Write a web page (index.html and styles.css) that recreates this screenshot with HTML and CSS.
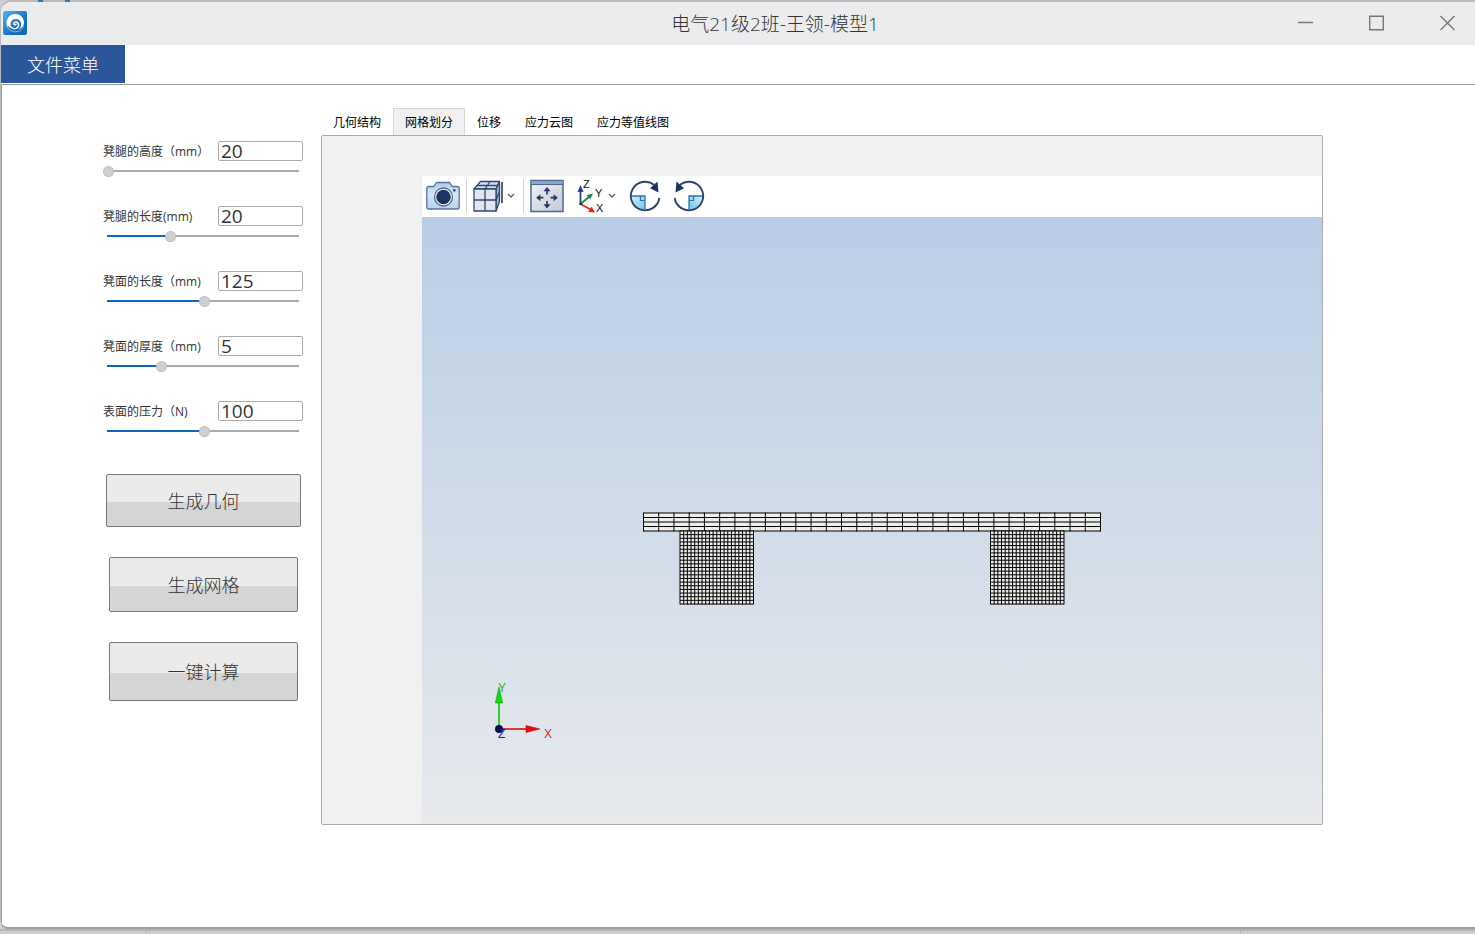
FILE: index.html
```html
<!DOCTYPE html>
<html lang="zh-CN">
<head>
<meta charset="utf-8">
<title>电气21级2班-王领-模型1</title>
<link rel="stylesheet" href="styles.css">
</head>
<body>
<div class="window">
  <header class="titlebar">
    <svg class="logo" viewBox="0 0 24 24" aria-hidden="true">
      <defs><linearGradient id="logo-bg" x1="0" y1="0" x2="1" y2="1"><stop offset="0" stop-color="#4cb4f3"/><stop offset=".7" stop-color="#1468b8"/></linearGradient></defs>
      <rect width="24" height="24" rx="2" fill="url(#logo-bg)"/>
      <path d="M4.500 17C1.500 10 5.500 3 12 3c5 0 9 3.300 9 8.300 0 4-2.800 6.400-6.200 6.900 2-.9 3.400-2.600 3.400-5 0-3-2.300-5.100-5.300-5.100-3.200 0-5.400 2.100-5.400 4.900 0 1.700.7 3 2 4C6.800 16.800 5.200 15.500 4.500 14z" fill="#fff"/>
      <path d="M8.500 16.500c1.500 1.300 3.700 1.600 5.300.5 2-1.300 2.400-4 .8-5.400-1.400-1.200-3.700-.5-3.700 1.100 0 1 1.300 1.500 2 .7" fill="none" stroke="#fff" stroke-width="1.500" stroke-linecap="round"/>
      <path d="M4 15c1.200 3.700 4.500 5.900 8.300 5.900 4.400 0 7.900-3 8.500-7.400" fill="none" stroke="#8ec4ee" stroke-width=".9"/>
    </svg>
    <h1 class="title">电气21级2班-王领-模型1</h1>
    <div class="controls">
      <button type="button" aria-label="最小化"><svg viewBox="0 0 15 16"><path d="M0 7.500h15"/></svg></button>
      <button type="button" aria-label="最大化"><svg viewBox="0 0 15 16"><path d="M.7 1.200h13.600v13.600H.7z"/></svg></button>
      <button type="button" aria-label="关闭"><svg viewBox="0 0 15 16"><path d="M.5 1l14 14M14.500 1l-14 14"/></svg></button>
    </div>
  </header>
  <nav class="menubar"><button type="button" class="menu-item">文件菜单</button></nav>
  <main class="content">
    <aside class="sidebar">
      <form class="fields">
        <div class="field">
          <div class="field-head"><label for="leg-height">凳腿的高度（mm）</label><input class="value" id="leg-height" type="text" value="20"></div>
          <input class="slider" type="range" min="0" max="1000" value="0" aria-label="凳腿的高度" style="--fill:0%">
        </div>
        <div class="field">
          <div class="field-head"><label for="leg-length">凳腿的长度(mm)</label><input class="value" id="leg-length" type="text" value="20"></div>
          <input class="slider" type="range" min="0" max="1000" value="328" aria-label="凳腿的长度" style="--fill:33%">
        </div>
        <div class="field">
          <div class="field-head"><label for="seat-length">凳面的长度（mm)</label><input class="value" id="seat-length" type="text" value="125"></div>
          <input class="slider" type="range" min="0" max="1000" value="508" aria-label="凳面的长度" style="--fill:50%">
        </div>
        <div class="field">
          <div class="field-head"><label for="seat-thickness">凳面的厚度（mm)</label><input class="value" id="seat-thickness" type="text" value="5"></div>
          <input class="slider" type="range" min="0" max="1000" value="280" aria-label="凳面的厚度" style="--fill:28%">
        </div>
        <div class="field">
          <div class="field-head"><label for="pressure">表面的压力（N)</label><input class="value" id="pressure" type="text" value="100"></div>
          <input class="slider" type="range" min="0" max="1000" value="508" aria-label="表面的压力" style="--fill:50%">
        </div>
      </form>
      <div class="actions">
        <button type="button" class="action geometry">生成几何</button>
        <button type="button" class="action mesh-button">生成网格</button>
        <button type="button" class="action compute">一键计算</button>
      </div>
    </aside>
    <section class="workspace">
      <div class="tabs" role="tablist">
        <button type="button" role="tab" class="tab">几何结构</button>
        <button type="button" role="tab" class="tab selected" aria-selected="true">网格划分</button>
        <button type="button" role="tab" class="tab">位移</button>
        <button type="button" role="tab" class="tab">应力云图</button>
        <button type="button" role="tab" class="tab">应力等值线图</button>
      </div>
      <div class="viewer">
        <div class="toolbar" role="toolbar">
          <button type="button" class="tool" aria-label="截图">
            <svg width="34" height="32" viewBox="0 0 34 32">
              <defs><linearGradient id="cam" x1="0" y1="0" x2="0" y2="1"><stop offset="0" stop-color="#a9cbea"/><stop offset=".45" stop-color="#d7e7f6"/><stop offset="1" stop-color="#b4d2ee"/></linearGradient></defs>
              <path d="M2.500 6.500h5.200l2.800-4h13l2.800 4h5.200q1.700 0 1.700 1.700V27q0 2-2 2H2.800q-2 0-2-2V8.200q0-1.700 1.700-1.700z" fill="url(#cam)" stroke="#5c7395" stroke-width="1.300"/>
              <circle cx="17.500" cy="17" r="9" fill="#eef3f8" stroke="#52698d" stroke-width="1.300"/>
              <circle cx="17.500" cy="17" r="6.700" fill="#1c3564" stroke="#102750"/>
              <circle cx="28.300" cy="10.300" r="1.200" fill="#1f3c70"/>
            </svg>
          </button>
          <span class="divider"></span>
          <button type="button" class="tool with-menu" aria-label="视图">
            <svg width="30" height="32" viewBox="0 0 30 32">
              <g stroke="#34466e" stroke-width="1.300" stroke-linejoin="round">
                <path d="M1 9L7.500 1.500h19L23 9z" fill="#c7e3f7"/>
                <path d="M23 9l3.500-7.500v20L23 31z" fill="#9db1c9"/>
                <path d="M1 9h22v22H1z" fill="#e1e5ed"/>
                <path d="M12 31V9l5-7.500M1 20h22l3.500-8M4 5.500h20.700" fill="none"/>
                <path d="M29 2v21" fill="none" stroke-width="1.700"/>
              </g>
            </svg>
            <svg class="chevron" width="8" height="6" viewBox="0 0 8 6"><path d="M1 1l3 3 3-3"/></svg>
          </button>
          <span class="divider"></span>
          <button type="button" class="tool" aria-label="适应窗口">
            <svg width="34" height="34" viewBox="0 0 34 34">
              <defs><linearGradient id="fit" x1="0" y1="0" x2="1" y2="1"><stop offset="0" stop-color="#f0f1f5"/><stop offset="1" stop-color="#c4cad6"/></linearGradient></defs>
              <path d="M1 1.500h32v31H1z" fill="url(#fit)" stroke="#52658b" stroke-width="1.500"/>
              <path d="M1.500 2h31v3h-31z" fill="#84a8d4"/><path d="M1 5.500h32" stroke="#52658b"/>
              <g fill="none" stroke="#213a68" stroke-width="1.700"><path d="M17 9.500v6M17 22v6M7.500 18.700h6M20.500 18.700h6"/></g>
              <path d="M17 8l3.500 4.200h-7zM17 29.500l3.500-4.200h-7zM6.200 18.700l4.200-3.500v7zM27.800 18.700l-4.200-3.500v7z" fill="#213a68"/>
            </svg>
          </button>
          <button type="button" class="tool with-menu axes-tool spaced" aria-label="坐标轴">
            <svg width="28" height="36" viewBox="0 0 28 36">
              <path d="M3.500 26V12" stroke="#25409a" stroke-width="1.800"/><path d="M3.500 7L.5 14h6z" fill="#25409a"/>
              <path d="M3.500 26L13 18" stroke="#168b42" stroke-width="1.800"/><path d="M16 15.500l-6.500 1.800 3.700 4z" fill="#168b42"/>
              <path d="M3.500 26l11 6" stroke="#e52720" stroke-width="1.800"/><path d="M18 34.500l-3.500-6-3.300 5.500z" fill="#e52720"/>
              <circle cx="3.500" cy="26" r="1.200" fill="#222"/>
              <g class="axis-label"><text x="6" y="10">Z</text><text x="18" y="19">Y</text><text x="19" y="34">X</text></g>
            </svg>
            <svg class="chevron" width="8" height="6" viewBox="0 0 8 6"><path d="M1 1l3 3 3-3"/></svg>
          </button>
          <button type="button" class="tool spaced" aria-label="顺时针旋转">
            <svg width="32" height="34" viewBox="0 0 32 34">
              <defs><linearGradient id="turn" x1="0" y1="0" x2="1" y2="1"><stop offset="0" stop-color="#d5effb"/><stop offset="1" stop-color="#72c1e8"/></linearGradient></defs>
              <g id="turn-icon">
                <path d="M2 17h14v14.500C8 31.500 2 25.500 2 17z" fill="url(#turn)"/>
                <path d="M1.500 17H16v15" fill="none" stroke="#2b73ae" stroke-width="1.300"/><path d="M11.500 17v4.500H16" fill="none" stroke="#2b73ae" stroke-width="1.200"/>
                <path d="M30.300 19A14.300 14.300 0 1 1 25 5.800" fill="none" stroke="#2d446f" stroke-width="1.900"/>
                <path d="M28.500 2.500l1 11-8.500-4.300z" fill="#1b3261"/>
              </g>
            </svg>
          </button>
          <button type="button" class="tool spaced" aria-label="逆时针旋转">
            <svg width="32" height="34" viewBox="0 0 32 34"><use href="#turn-icon" transform="translate(32 0) scale(-1 1)"/></svg>
          </button>
        </div>
        <svg class="scene" viewBox="0 0 900 607" role="img" aria-label="网格模型">
          <g id="mesh" class="mesh"></g>
          <g class="triad">
            <path d="M77 512V484" stroke="#19c819" stroke-width="1.700"/><path d="M77 470l3.700 16h-7.400z" fill="#0ddc0d" stroke="#129c12" stroke-width=".6"/>
            <path d="M77 512h28" stroke="#d01c1c" stroke-width="1.700"/><path d="M118 512l-14-3.500v7z" fill="#f00808" stroke="#b01010" stroke-width=".6"/>
            <circle cx="77" cy="512" r="4" fill="#050a55"/>
            <text x="76" y="475" fill="#29b329">Y</text><text x="76" y="521" fill="#1414dd">Z</text><text x="122" y="521" fill="#c52b2b">X</text>
          </g>
        </svg>
      </div>
    </section>
  </main>
</div>
<footer class="desktop-strip"></footer>
<script src="mesh.js"></script>
</body>
</html>
```
FILE: styles.css
```css
* { box-sizing: border-box; }

body {
  margin: 0;
  min-height: 100vh;
  display: flex;
  flex-direction: column;
  background: #d0d0d0;
  color: #333;
  font-family: "Open Sans", "Noto Sans CJK SC", sans-serif;
  font-size: 12px;
}

/* Desktop marks showing along the top edge of the window */
body::before {
  content: "";
  position: absolute;
  top: 0;
  left: 38px;
  width: 32px;
  height: 2px;
  background: linear-gradient(90deg, #3a75a3 5px, transparent 5px, transparent 27px, #3a75a3 27px);
}

button, input { font: inherit; color: inherit; }
button { margin: 0; padding: 0; border: 0; background: none; }
svg { display: block; }

.window {
  flex: 1;
  display: flex;
  flex-direction: column;
  overflow: hidden;
  border: solid #bbb;
  border-width: 2px 0 2px 1px;
  border-bottom-color: #9b9e9d;
  border-radius: 12px 0 0 8px;
  background: #fff;
}

.titlebar {
  display: flex;
  align-items: center;
  height: 43px;
  padding: 0 20px 2px 2px;
  background: #ebecee;
}
.logo { width: 24px; height: 24px; }
.title {
  flex: 1;
  margin: 0 0 0 225px;
  padding-top: 2px;
  text-align: center;
  font-size: 19px;
  font-weight: 300;
  line-height: 24px;
}
.controls { display: flex; gap: 56px; }
.controls svg { width: 15px; height: 16px; fill: none; stroke: #777; stroke-width: 1.4; }

.menubar {
  display: flex;
  height: 40px;
  border-bottom: 1px solid #999;
  padding-bottom: 1px;
}
.menu-item {
  padding: 0 26px;
  background: #2b579a;
  color: #fff;
  font-size: 18px;
  font-weight: 300;
}

.content {
  flex: 1;
  display: flex;
  gap: 18px;
  padding: 23px 152px 102px 101px;
  border-left: 1px solid #999;
}

.sidebar { width: 200px; padding-top: 33px; }
.fields { display: flex; flex-direction: column; gap: 29px; }
.field { display: flex; flex-direction: column; gap: 4px; }
.field-head {
  display: flex;
  justify-content: space-between;
  align-items: center;
  height: 20px;
  white-space: nowrap;
}
.value {
  width: 85px;
  height: 20px;
  padding: 0 2px;
  border: 1px solid #aaa;
  border-radius: 2px;
  background: #fff;
  font-size: 19px;
  line-height: 18px;
}
.slider {
  appearance: none;
  width: 100%;
  height: 12px;
  margin: 0;
  background:
    linear-gradient(90deg, #0d67c0 var(--fill), #aaa var(--fill)) center / calc(100% - 8px) 2px no-repeat;
}
.slider::-webkit-slider-thumb {
  appearance: none;
  width: 11px;
  height: 11px;
  border: 1px dotted #aaa;
  border-radius: 50%;
  background: #d0d0d0;
}

.actions {
  display: flex;
  flex-direction: column;
  align-items: flex-start;
  gap: 30px;
  padding: 37px 0 0 3px;
}
.action {
  width: 189px;
  margin-left: 3px;
  padding-bottom: 2px;
  border: 1px solid #777;
  border-radius: 2px;
  background: linear-gradient(#ebebeb 52%, #d5d5d5 52%);
  font-size: 18px;
  font-weight: 300;
}
.geometry { width: 195px; height: 53px; margin-left: 0; }
.mesh-button { height: 55px; }
.compute { height: 59px; }

.workspace { flex: 1; display: flex; flex-direction: column; }
.tabs { display: flex; height: 27px; }
.tab { padding: 0 12px; color: #000; }
.tab.selected {
  padding: 0 11px;
  border: 1px solid #d8d8d8;
  border-bottom: 0;
  background: #f1f1f1;
}

.viewer {
  flex: 1;
  display: flex;
  flex-direction: column;
  padding: 40px 0 0 100px;
  border: 1px solid #a9a9a9;
  border-radius: 2px;
  background: #f1f1f1;
}
.toolbar {
  display: flex;
  align-items: center;
  gap: 6px;
  height: 41px;
  padding: 0 0 2px 4px;
  background: #fff;
}
.with-menu { display: flex; align-items: center; gap: 4px; padding-right: 2px; }
.axes-tool { gap: 3px; padding-right: 1px; }
.spaced { margin-left: 7px; }
.spaced ~ .spaced { margin-left: 6px; }
.divider { width: 1px; height: 34px; background: #d3d3d3; }
.chevron { fill: none; stroke: #55717c; stroke-width: 1.5; }
.axis-label { fill: #111; font-family: "Liberation Sans", sans-serif; font-size: 11px; }

.scene {
  flex: 1;
  width: 100%;
  min-height: 0;
  background: linear-gradient(#b8cde5, #e8eaed);
}
.mesh rect { fill: #ededeb; }
.mesh path { fill: none; stroke: #000; stroke-width: 1; }
.triad text { font-family: "Liberation Sans", sans-serif; font-size: 12px; }

.desktop-strip {
  height: 6px;
  background:
    linear-gradient(#b5b5b5, #b5b5b5) 146px 0 / 1px 6px no-repeat,
    linear-gradient(#b5b5b5, #b5b5b5) 1240px 0 / 1px 6px no-repeat,
    linear-gradient(#a9aaaa, #d0d0d0 3px);
}
```
FILE: mesh.js
```js
const mesh = document.getElementById("mesh");
const SVG = "http://www.w3.org/2000/svg";

function addBlock(x, y, width, height, columns, rows) {
  const rect = document.createElementNS(SVG, "rect");
  for (const [name, value] of Object.entries({ x, y, width, height })) {
    rect.setAttribute(name, value);
  }
  let d = "";
  for (let i = 0; i <= columns; i++) {
    d += `M${x + (width * i) / columns} ${y - 0.5}v${height + 1}`;
  }
  for (let j = 0; j <= rows; j++) {
    d += `M${x} ${y + (height * j) / rows}h${width}`;
  }
  const path = document.createElementNS(SVG, "path");
  path.setAttribute("d", d);
  mesh.append(rect, path);
}

addBlock(221.5, 296, 457, 18, 30, 4);
addBlock(258, 314, 73.5, 73, 20, 20);
addBlock(568.5, 314, 73.5, 73, 20, 20);
```
